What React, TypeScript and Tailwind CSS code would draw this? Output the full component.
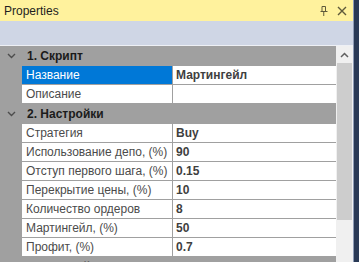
import React from 'react';

type Row = { label: string; value: string; selected?: boolean };

const scriptRows: Row[] = [
  { label: 'Название', value: 'Мартингейл', selected: true },
  { label: 'Описание', value: '' },
];

const settingsRows: Row[] = [
  { label: 'Стратегия', value: 'Buy' },
  { label: 'Использование депо, (%)', value: '90' },
  { label: 'Отступ первого шага, (%)', value: '0.15' },
  { label: 'Перекрытие цены, (%)', value: '10' },
  { label: 'Количество ордеров', value: '8' },
  { label: 'Мартингейл, (%)', value: '50' },
  { label: 'Профит, (%)', value: '0.7' },
];

function Category({ title }: { title: string }) {
  return (
    <div className="h-[20px] shrink-0 bg-[#A0A0A0] flex items-center whitespace-nowrap">
      <div className="w-[22px] flex justify-center pb-[1px]">
        <svg width="9" height="6" viewBox="0 0 9 6">
          <path d="M1 1l3.5 3.5L8 1" fill="none" stroke="#4d4d4d" strokeWidth="1.4" />
        </svg>
      </div>
      <span className="pl-[5px] text-[12px] font-bold text-[#1b1b1b] leading-none">{title}</span>
    </div>
  );
}

function PropRow({ row }: { row: Row }) {
  return (
    <div className="h-[19px] shrink-0 flex bg-[#A0A0A0] whitespace-nowrap">
      <div className="w-[22px] shrink-0" />
      <div
        className={`w-[150px] shrink-0 h-[18px] flex items-center pl-[4px] text-[12px] leading-none overflow-hidden ${
          row.selected ? 'bg-[#0078D7] text-white' : 'bg-white text-[#4b4b4b]'
        }`}
      >
        {row.label}
      </div>
      <div className="w-[1px] shrink-0" />
      <div className="flex-1 h-[18px] bg-white flex items-center pl-[3px] text-[12px] font-bold text-[#3f3f3f] leading-none">
        {row.value}
      </div>
    </div>
  );
}

export default function App() {
  return (
    <div
      className="w-[359px] h-[262px] flex overflow-hidden bg-white"
      style={{ fontFamily: '"Liberation Sans", Arial, sans-serif' }}
    >
      <div className="w-[353px] flex flex-col">
        {/* Title bar */}
        <div className="h-[21px] shrink-0 bg-[#FFF29D] flex items-center justify-between pl-[4px] pr-[6px]">
          <span className="text-[12px] text-[#1e1e1e] leading-none">Properties</span>
          <div className="flex items-center gap-[9px]">
            <svg width="8" height="10" viewBox="0 0 8 10">
              <path d="M2 0.5h3.5v5H2z M0.5 5.5h7 M3.75 5.5v4.5" fill="none" stroke="#5f5a3a" strokeWidth="1" />
            </svg>
            <svg width="10" height="10" viewBox="0 0 10 10">
              <path d="M1 1l8 8M9 1l-8 8" stroke="#5f5a3a" strokeWidth="1.4" />
            </svg>
          </div>
        </div>
        {/* Toolbar band */}
        <div className="h-[25px] shrink-0 bg-[#CFD6E5] border-b border-[#EEF0F5]" />
        {/* Grid */}
        <div className="flex flex-1 min-h-0">
          <div className="flex-1 flex flex-col overflow-hidden">
            <Category title="1. Скрипт" />
            {scriptRows.map((r) => (
              <PropRow key={r.label} row={r} />
            ))}
            <Category title="2. Настройки" />
            {settingsRows.map((r) => (
              <PropRow key={r.label} row={r} />
            ))}
            <Category title="3. Настройки" />
          </div>
          {/* Scrollbar */}
          <div className="w-[17px] shrink-0 bg-[#F0F0F0] flex flex-col">
            <div className="h-[17px] flex items-center justify-center">
              <svg width="9" height="6" viewBox="0 0 9 6">
                <path d="M1 5l3.5-3.5L8 5" fill="none" stroke="#606060" strokeWidth="1.5" />
              </svg>
            </div>
            <div className="mx-[1px] h-[157px] bg-[#CDCDCD]" />
          </div>
        </div>
      </div>
      <div className="w-[1px] bg-[#8E9BB5]" />
      <div className="flex-1 bg-[#293955]" />
    </div>
  );
}
